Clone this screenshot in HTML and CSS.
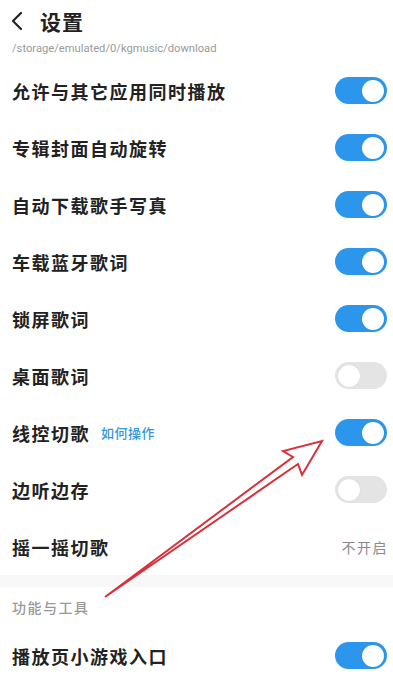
FILE: index.html
```html
<!DOCTYPE html>
<html lang="zh-CN">
<head>
<meta charset="utf-8">
<link rel="stylesheet" href="styles.css">
</head>
<body>
<div class="page">
  <header class="header">
    <svg class="back" width="12" height="20" viewBox="0 0 12 20"><path d="M10 2 L2 10 L10 18" fill="none" stroke="#222" stroke-width="2.2" stroke-linecap="round" stroke-linejoin="round"/></svg>
    <h1 class="title">设置</h1>
  </header>
  <div class="path">/storage/emulated/0/kgmusic/download</div>
  <ul class="list">
    <li class="row"><span class="label">允许与其它应用同时播放</span><span class="switch on"></span></li>
    <li class="row"><span class="label">专辑封面自动旋转</span><span class="switch on"></span></li>
    <li class="row"><span class="label">自动下载歌手写真</span><span class="switch on"></span></li>
    <li class="row"><span class="label">车载蓝牙歌词</span><span class="switch on"></span></li>
    <li class="row"><span class="label">锁屏歌词</span><span class="switch on"></span></li>
    <li class="row"><span class="label">桌面歌词</span><span class="switch"></span></li>
    <li class="row"><span class="label">线控切歌<span class="link">如何操作</span></span><span class="switch on"></span></li>
    <li class="row"><span class="label">边听边存</span><span class="switch"></span></li>
    <li class="row"><span class="label">摇一摇切歌</span><span class="value">不开启</span></li>
  </ul>
  <div class="divider"></div>
  <div class="section">功能与工具</div>
  <ul class="list">
    <li class="row"><span class="label">播放页小游戏入口</span><span class="switch on"></span></li>
  </ul>
  <svg class="arrow" width="393" height="680" viewBox="0 0 393 680">
    <path d="M105 597 L293 457 L283 451 L322 441 L302 475 L298 464 Z" fill="none" stroke="#d8313a" stroke-width="2" stroke-linejoin="miter"/>
  </svg>
</div>
</body>
</html>
```
FILE: styles.css
```css
* { box-sizing: border-box; }
html, body { margin: 0; padding: 0; background: #fff; }
body {
  font-family: "Noto Sans CJK SC", "Noto Sans", sans-serif;
  color: #222;
}
.page { position: relative; width: 393px; height: 680px; overflow: hidden; }
.header {
  height: 42px;
  display: flex;
  align-items: center;
  padding-left: 11px;
}
.back { display: block; }
.title {
  margin: 0 0 0 17px;
  font-size: 21px;
  font-weight: 700;
  letter-spacing: 1px;
  line-height: 1;
}
.path {
  height: 20px;
  line-height: 14px;
  padding: 0 12px;
  font-family: Roboto, "Noto Sans", sans-serif;
  font-size: 11.2px;
  color: #9a9a9a;
}
.list { list-style: none; margin: 0; padding: 0; }
.row {
  height: 57px;
  display: flex;
  align-items: center;
  justify-content: space-between;
  padding: 0 6px 0 12px;
}
.label {
  font-size: 18px;
  font-weight: 600;
  letter-spacing: 1.5px;
  color: #222;
  display: flex;
  align-items: center;
}
.link {
  font-size: 13px;
  font-weight: 500;
  color: #3596e0;
  letter-spacing: 0.5px;
  margin-left: 11px;
}
.value {
  font-size: 14px;
  color: #8a8a8a;
  letter-spacing: 1.5px;
  margin-right: -1px;
}
.switch {
  position: relative;
  width: 52px;
  height: 27px;
  border-radius: 14px;
  background: #e4e4e4;
  flex: none;
}
.switch::after {
  content: "";
  position: absolute;
  top: 2.5px;
  left: 3px;
  width: 22px;
  height: 22px;
  border-radius: 50%;
  background: #fff;
  box-shadow: 0 0 1px rgba(0,0,0,0.15);
}
.switch.on { background: #2c96ec; }
.switch.on::after { left: 27px; }
.divider { height: 12px; background: #f8f8f8; }
.section {
  height: 40px;
  display: flex;
  align-items: center;
  padding-left: 12px;
  font-size: 14px;
  font-weight: 500;
  color: #999;
  letter-spacing: 1.5px;
}
.arrow { position: absolute; left: 0; top: 0; pointer-events: none; }
```
